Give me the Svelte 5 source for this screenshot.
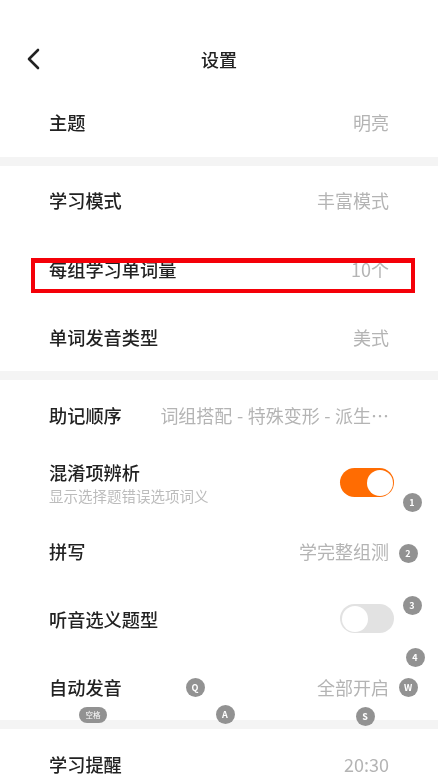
<script>
  const keyBadges = [
    { label: '1', x: 412, y: 502 },
    { label: '2', x: 408, y: 553 },
    { label: '3', x: 412, y: 605 },
    { label: '4', x: 415, y: 657 },
    { label: 'W', x: 408, y: 687 },
    { label: 'Q', x: 195, y: 687 },
    { label: 'A', x: 225, y: 714 },
    { label: 'S', x: 365, y: 716 }
  ];
</script>

<div class="page">
  <header class="nav">
    <button class="back" aria-label="返回">
      <svg viewBox="0 0 14 22" width="14" height="22" fill="none" stroke="currentColor" stroke-width="2.6" stroke-linecap="round" stroke-linejoin="round">
        <path d="M12 2L3 11l9 9" />
      </svg>
    </button>
    <h1>设置</h1>
  </header>

  <section class="group first">
    <div class="row"><span class="label">主题</span><span class="value">明亮</span></div>
  </section>

  <section class="group three">
    <div class="row"><span class="label">学习模式</span><span class="value">丰富模式</span></div>
    <div class="row"><span class="label shifted">每组学习单词量</span><span class="value shifted">10个</span></div>
    <div class="row"><span class="label">单词发音类型</span><span class="value">美式</span></div>
  </section>

  <section class="group five">
    <div class="row">
      <span class="label">助记顺序</span>
      <span class="value order">词组搭配 - 特殊变形 - 派生…</span>
    </div>
    <div class="row">
      <div class="stack">
        <span class="label">混淆项辨析</span>
        <span class="sub">显示选择题错误选项词义</span>
      </div>
      <span class="toggle on"><i></i></span>
    </div>
    <div class="row"><span class="label">拼写</span><span class="value">学完整组测</span></div>
    <div class="row"><span class="label">听音选义题型</span><span class="toggle"><i></i></span></div>
    <div class="row"><span class="label">自动发音</span><span class="value">全部开启</span></div>
  </section>

  <section class="group last">
    <div class="row"><span class="label">学习提醒</span><span class="value">20:30</span></div>
  </section>

  <div class="highlight"></div>

  {#each keyBadges as b}
    <span class="badge" style="left: {b.x}px; top: {b.y}px">{b.label}</span>
  {/each}
  <span class="badge wide" style="left: 93px; top: 715px">空格</span>
</div>

<style>
  :global(body) {
    margin: 0;
    background: #fff;
  }

  .page {
    position: relative;
    width: 438px;
    height: 780px;
    overflow: hidden;
    background: #fff;
    font-family: "Noto Sans CJK SC", "Noto Sans", sans-serif;
    filter: blur(0.4px);
  }

  .nav {
    position: relative;
    height: 89px;
    display: flex;
    justify-content: center;
    padding-top: 45px;
    box-sizing: border-box;
  }

  .nav h1 {
    margin: 0;
    font-size: 18px;
    font-weight: 500;
    line-height: 28px;
    color: #222;
  }

  .back {
    position: absolute;
    left: 26px;
    top: 48px;
    padding: 0;
    border: 0;
    background: none;
    color: #222;
    line-height: 0;
  }

  .group {
    border-bottom: 9.5px solid #f4f4f4;
  }

  .group.last {
    border-bottom: 0;
    padding-top: 1px;
  }

  .row {
    height: 68px;
    box-sizing: border-box;
    padding: 0 49px;
    display: flex;
    align-items: center;
    justify-content: space-between;
  }

  .first .row {
    padding-bottom: 2px;
  }

  .three .row {
    height: 68.33px;
  }

  .five {
    padding-top: 0.5px;
  }

  .five .row {
    padding-top: 1px;
  }

  .label {
    flex: none;
    font-size: 18.2px;
    font-weight: 500;
    line-height: 26px;
    color: #222;
  }

  .value {
    font-size: 18px;
    line-height: 26px;
    color: #b4b4b4;
  }

  .value.order {
    word-spacing: 0.5px;
  }

  /* this row sits a little high behind the red box */
  .shifted {
    margin-top: 1px;
  }

  .stack {
    display: flex;
    flex-direction: column;
  }

  .sub {
    font-size: 14.5px;
    line-height: 22px;
    color: #bcbcbc;
  }

  .toggle {
    flex: none;
    margin-right: -5px;
    width: 54px;
    height: 29px;
    box-sizing: border-box;
    padding: 1.5px;
    border-radius: 15px;
    background: #e2e2e2;
    display: flex;
  }

  .toggle i {
    width: 26px;
    height: 26px;
    border-radius: 50%;
    background: #fff;
  }

  .toggle.on {
    background: #ff6c02;
    justify-content: flex-end;
  }

  .highlight {
    position: absolute;
    left: 31px;
    top: 258px;
    width: 384px;
    height: 35px;
    box-sizing: border-box;
    border: solid #f40008;
    border-width: 5px 4px 4px;
  }

  .badge {
    position: absolute;
    width: 19px;
    height: 19px;
    margin: -9.5px 0 0 -9.5px;
    border-radius: 50%;
    background: #929292;
    color: #fff;
    font-size: 9px;
    font-weight: 700;
    line-height: 19px;
    text-align: center;
  }

  .badge.wide {
    width: 28px;
    height: 16px;
    margin: -8px 0 0 -14px;
    border-radius: 8px;
    font-size: 7.5px;
    font-weight: 400;
    line-height: 16px;
  }
</style>
